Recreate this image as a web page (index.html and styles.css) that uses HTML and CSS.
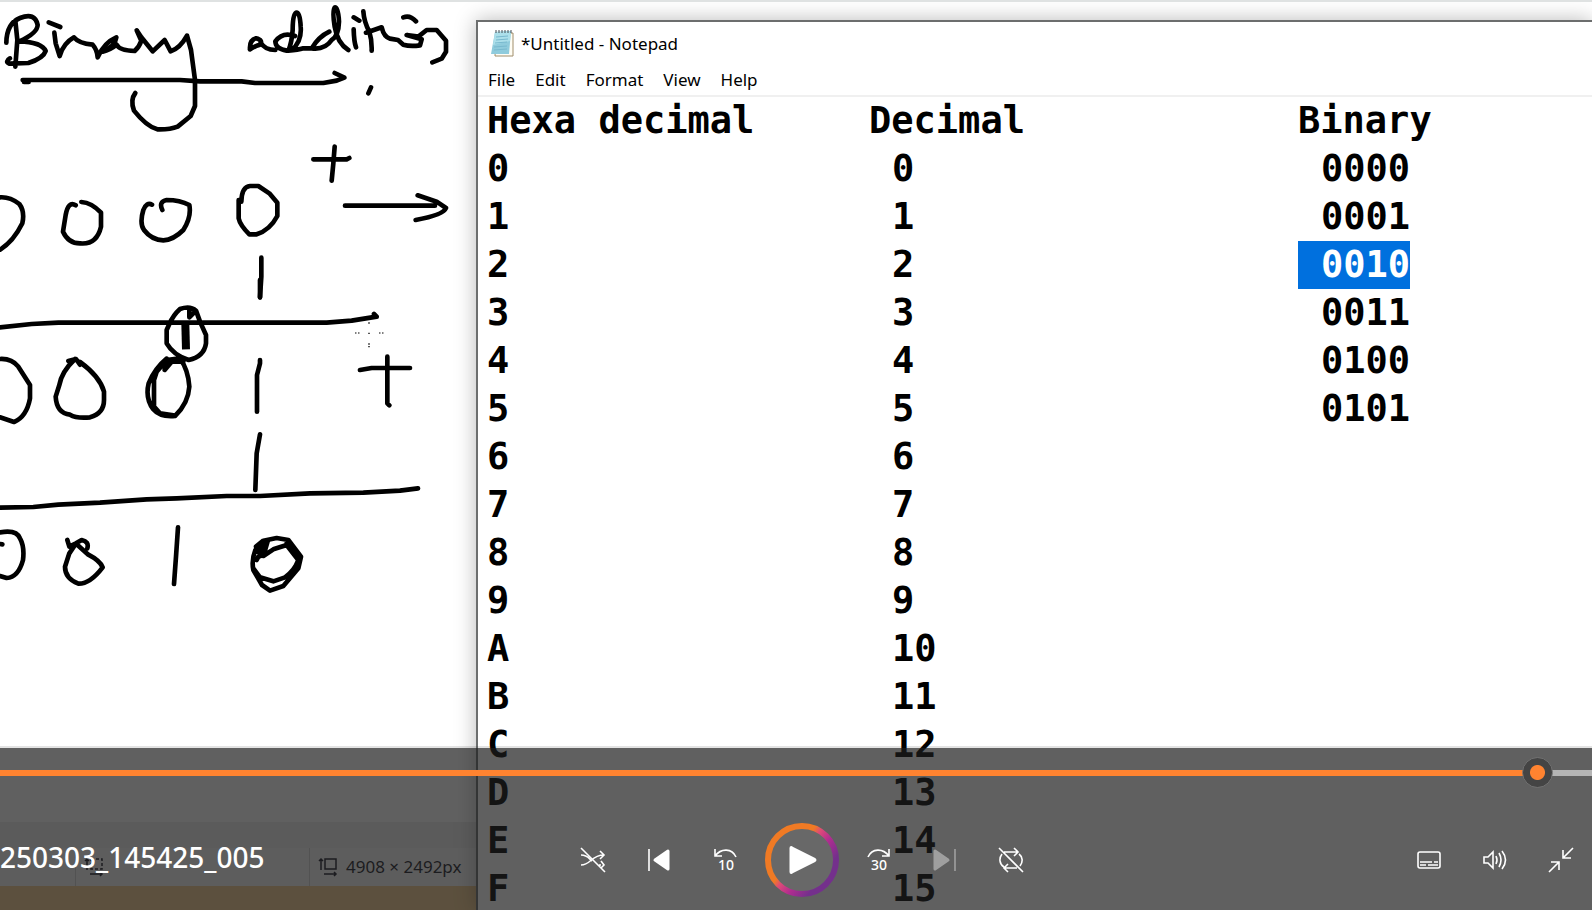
FILE: index.html
```html
<!DOCTYPE html>
<html lang="en">
<head>
<meta charset="utf-8">
<title>250303_145425_005</title>
<link rel="stylesheet" href="styles.css">
</head>
<body>
<main class="player">
  <div class="video">
    <section class="paint" aria-label="Whiteboard">
      <svg class="ink" viewBox="0 0 1428 2238" role="img" aria-label="Handwritten binary addition">
        <g>
          <path d="M19 128Q20 70 60 54Q105 36 113 75Q112 100 58 124Q125 126 137 153Q130 175 85 189L28 191Q14 184 30 175M46 62L52 120L46 200M146 67L181 81M163 98L167 130L179 168Q190 130 222 112Q236 130 278 134Q292 150 293 172Q312 128 349 112Q345 140 308 155Q330 150 350 134Q358 152 404 153Q418 140 424 122L410 91L424 112L458 154L494 120L512 154Q540 145 561 107L573 150L585 240V318L572 348L533 380Q510 389 472 388Q440 380 402 332Q390 300 406 279"/>
          <path d="M68 240H540L600 244H725L765 249H970L1010 242L1033 233L1004 219M86 246H72M1113 262L1105 280"/>
          <g transform="translate(720 0)">
            <path d="M30 148Q28 120 48 115Q70 120 60 134Q45 138 30 148M62 128Q75 150 106 150M165 108Q128 94 106 124Q106 146 140 152L155 150Q186 125 182 80Q180 38 170 38Q158 38 158 90Q155 130 145 152Q175 150 190 145L225 145M268 95Q236 110 215 145Q255 150 275 120Q296 108 297 65Q295 22 285 22Q276 30 284 80Q292 130 325 150M341 88Q342 125 348 142M341 52L358 62M370 34Q372 65 388 95Q396 120 395 152M378 98L425 82Q432 112 450 116L474 120L490 134Q510 140 540 136L545 118L500 105L535 110L560 90H590L618 122V155L605 176L577 187M490 52Q510 44 528 64"/>
          </g>
          <path d="M940 478H1040L1048 474M1004 440L1000 490L995 542M0 592Q30 590 58 612Q75 635 67 670Q40 725 0 749M227 616Q205 602 197 645L189 695Q205 730 240 730Q290 735 303 680V638Q275 608 244 606M456 614Q440 605 430 630Q418 670 432 690Q455 720 490 721Q520 720 550 690Q575 650 568 615Q540 600 500 600Q475 605 487 630M724 605Q725 560 750 558H775L808 580L832 608V648Q810 690 770 703H748Q720 675 716 655V600M784 773V830L780 892M1035 617H1305M1253 586L1310 605L1338 624Q1330 645 1247 660"/>
        </g>
        <g transform="translate(0 840)">
          <path d="M780 0V52M0 142L95 132L175 128H980L1055 122L1130 110L1122 102M0 237Q35 235 55 260L90 315V355Q80 410 42 426L0 412M205 243L228 237L240 254M225 237Q185 275 178 315L167 350Q170 400 210 404Q230 416 270 412Q312 400 312 360V335Q300 290 240 246M508 132L500 150V190Q520 225 566 240Q612 230 618 190V165L600 125L588 92Q570 76 540 87Q520 105 508 132M568 84V112L585 95M500 236Q465 265 446 310Q435 355 460 388Q480 412 525 408Q565 370 568 320Q565 270 540 235L500 240L470 275L462 300V380L480 400L520 406M500 236L494 270L515 245H550M780 240V250L771 285V395M780 463L770 520L766 630M1080 270L1115 264H1230M1162 230V370L1168 376M0 683L100 681L175 674L300 668L440 658L530 655L680 648H780L930 640L1090 638L1200 632L1254 625M0 757Q50 748 60 775Q74 800 69 840Q55 892 20 894L0 888M0 792L7 793M202 780L208 800L228 790L245 780Q268 785 262 805M208 800L225 795L208 820L195 860Q195 895 235 911Q270 912 308 862Q300 842 265 824L230 793M534 742L528 830L522 912"/>
          <path d="M782 828L768 800L790 782L830 774L865 780L903 830L895 865L850 918L810 932L786 915L760 870Q754 840 766 810L804 780L790 828L820 808L860 795L895 840Q885 870 855 892L820 904L780 892L760 865M798 785L770 840M860 790L900 830L880 872"/>
          <path class="thick" d="M556 132L558 208"/>
          <path class="cursor-dots" d="M1105 129H1109M1066 159H1069M1075 159H1078M1105 160H1109M1138 159H1141M1147 159H1150M1105 192H1109M1105 200H1109"/>
        </g>
      </svg>
      <div class="paint-status">
        <div class="status-cell"></div>
        <div class="status-cell selection-size">
          <svg class="status-icon" viewBox="0 0 20 20" aria-hidden="true"><path d="M3 13V2M1 4L3 2L5 4M6 17H18M16 15L18 17L16 19"/><path stroke-dasharray="3 2" d="M7 2H18V12H7Z"/></svg>
        </div>
        <div class="status-cell canvas-size">
          <svg class="status-icon" viewBox="0 0 20 20" aria-hidden="true"><path d="M3 13V2M1 4L3 2L5 4M7 2H18V12H7ZM6 17H18M16 15L18 17L16 19"/></svg>
          <span>4908 × 2492px</span>
        </div>
      </div>
      <div class="taskbar"></div>
    </section>

    <section class="notepad" aria-label="Notepad">
      <header class="titlebar">
        <svg class="notepad-icon" viewBox="0 0 24 28" aria-hidden="true">
          <path d="M6 5L23 4V27H5Z" fill="#fffdf4" stroke="#a08d6a"/>
          <path d="M5 3L21 2L19 25H1L3 14Z" fill="#8fcbdc"/>
          <path d="M5 3L21 2L20 12L3 16Z" fill="#acdfea"/>
          <path d="M6 8L18 7M6 11L18 10M5 14L17 13M4 18L17 17M4 21L17 20" stroke="#78b9ce" fill="none"/>
          <path d="M6 1V4M9 1V4M12 1V4M15 1V4M18 1V4M21 1V4" stroke="#454b50"/>
        </svg>
        <h1>*Untitled - Notepad</h1>
      </header>
      <nav class="menubar" aria-label="Notepad menu">
        <button type="button">File</button>
        <button type="button">Edit</button>
        <button type="button">Format</button>
        <button type="button">View</button>
        <button type="button">Help</button>
      </nav>
      <table class="document">
        <colgroup><col class="col-hex"><col class="col-dec"><col></colgroup>
        <thead><tr><th>Hexa decimal</th><th>Decimal</th><th>Binary</th></tr></thead>
        <tbody>
          <tr><td>0</td><td>0</td><td>0000</td></tr>
          <tr><td>1</td><td>1</td><td>0001</td></tr>
          <tr><td>2</td><td>2</td><td><mark>0010</mark></td></tr>
          <tr><td>3</td><td>3</td><td>0011</td></tr>
          <tr><td>4</td><td>4</td><td>0100</td></tr>
          <tr><td>5</td><td>5</td><td>0101</td></tr>
          <tr><td>6</td><td>6</td><td></td></tr>
          <tr><td>7</td><td>7</td><td></td></tr>
          <tr><td>8</td><td>8</td><td></td></tr>
          <tr><td>9</td><td>9</td><td></td></tr>
          <tr><td>A</td><td>10</td><td></td></tr>
          <tr><td>B</td><td>11</td><td></td></tr>
          <tr><td>C</td><td>12</td><td></td></tr>
          <tr><td>D</td><td>13</td><td></td></tr>
          <tr><td>E</td><td>14</td><td></td></tr>
          <tr><td>F</td><td>15</td><td></td></tr>
        </tbody>
      </table>
    </section>
  </div>

  <div class="overlay">
    <input class="seek" type="range" min="0" max="1000" value="975" aria-label="Seek">
    <div class="controls">
      <p class="title">250303_145425_005</p>
      <div class="transport">
        <button class="control" type="button" aria-label="Shuffle off">
          <svg class="icon" viewBox="0 0 24 24"><path d="M0 7C7 7 8 11 11 13M0 17C10 17 10 7 23 7M19 3L23 7L19 11M18 17H20M20 13L23 17L20 20M0 0L24 24"/></svg>
        </button>
        <button class="control" type="button" aria-label="Previous">
          <svg class="icon" viewBox="0 0 24 24"><path d="M2 1V23"/><path class="solid" d="M21 3V21L8 12Z"/></svg>
        </button>
        <button class="control" type="button" aria-label="Skip back 10 seconds">
          <svg class="icon" viewBox="0 0 24 24"><path d="M2 1V8H9M2 8C8 0 19 0 23 9"/><text x="13" y="22">10</text></svg>
        </button>
        <button class="control play" type="button" aria-label="Play">
          <svg class="play-icon" viewBox="0 0 74 74">
            <defs><linearGradient id="ring" x1="0.1" y1="0.2" x2="0.9" y2="0.8">
              <stop offset="0.36" stop-color="#f07a24"/><stop offset="0.46" stop-color="#dd4a78"/><stop offset="0.64" stop-color="#b02c90"/><stop offset="0.88" stop-color="#74308c"/>
            </linearGradient></defs>
            <circle class="ring" cx="37" cy="37" r="34" stroke="url(#ring)"/>
            <path class="solid" d="M26 25V49Q26 50 27 49L49 38Q51 37 49 36L27 25Q26 24 26 25Z"/>
          </svg>
        </button>
        <button class="control" type="button" aria-label="Skip forward 30 seconds">
          <svg class="icon" viewBox="0 0 24 24"><path d="M22 1V8H15M22 8C16 0 5 0 1 9"/><text x="12" y="22">30</text></svg>
        </button>
        <button class="control" type="button" aria-label="Next" disabled>
          <svg class="icon" viewBox="0 0 24 24"><path d="M22 1V23"/><path class="solid" d="M2 3V21L15 12Z"/></svg>
        </button>
        <button class="control" type="button" aria-label="Repeat off">
          <svg class="icon" viewBox="0 0 24 24"><path d="M5 4H18M15 0L19 4L15 8M20 6C24 9 24 14 21 18M3 6C0 10 0 16 5 19M18 20H6M9 16L5 20L9 24M0 0L24 24"/></svg>
        </button>
      </div>
      <div class="options">
        <button class="control" type="button" aria-label="Subtitles">
          <svg class="icon" viewBox="0 0 24 24"><rect x="1" y="4" width="22" height="16" rx="2"/><path d="M3 14H15M17 14H21M3 17H9M11 17H21"/></svg>
        </button>
        <button class="control" type="button" aria-label="Volume">
          <svg class="icon" viewBox="0 0 24 24"><path d="M1 9V15H5L10 20V4L5 9ZM13 8Q15 12 13 16M16 5Q20 12 16 19M19 3Q26 12 19 21"/></svg>
        </button>
        <button class="control" type="button" aria-label="Exit full screen">
          <svg class="icon" viewBox="0 0 24 24"><path d="M24 0L14 10M14 2V10H22M0 24L10 14M2 14H10V22"/></svg>
        </button>
      </div>
    </div>
  </div>
</main>
</body>
</html>
```

FILE: styles.css
```css
* { box-sizing: border-box; }

body {
  margin: 0;
  font-family: "Noto Sans", "Open Sans", sans-serif;
  color: #000;
}

button {
  padding: 0;
  border: 0;
  background: none;
  color: inherit;
  font: inherit;
}

.player {
  position: relative;
  height: 100vh;
  overflow: hidden;
}

/* Recorded desktop */
.video {
  display: grid;
  grid-template-rows: minmax(0, 1fr);
  grid-template-columns: auto 1fr;
  height: 100%;
  overflow: hidden;
  border-top: 2px solid #dfe2e2;
  background: #fff;
}

.paint {
  display: flex;
  flex-direction: column;
  min-height: 0;
  margin-top: -2px;
}

.ink {
  display: block;
  width: 476px;
  fill: none;
  stroke: #000;
  stroke-width: 14;
  stroke-linecap: round;
  stroke-linejoin: round;
}

.ink .thick { stroke-width: 24; stroke-linecap: butt; }
.ink .cursor-dots { stroke-width: 4; stroke-linecap: butt; }

.paint-status {
  display: flex;
  margin-top: auto;
  border-top: 26px solid #ededed;
  background: #f5f5f5;
  color: #1c1c28;
  font-size: 17px;
  line-height: 38px;
}

.status-cell {
  display: flex;
  align-items: center;
  gap: 8px;
  padding-left: 8px;
  border-right: 1px solid #d0d0d0;
}

.status-cell:first-child { width: 76px; }
.selection-size { width: 234px; }
.canvas-size { flex: 1; border: 0; white-space: nowrap; }

.status-icon {
  width: 20px;
  height: 20px;
  fill: none;
  stroke: #1c1c28;
  stroke-width: 1.5;
}

.taskbar {
  height: 24px;
  background: #f0c98c;
}

.notepad {
  margin-top: 18px;
  border: solid #6c6e6e;
  border-width: 2px 0 0 2px;
  background: #fff;
  box-shadow: 0 0 20px rgba(0, 0, 0, 0.28);
}

.titlebar {
  display: flex;
  align-items: center;
  gap: 7px;
  height: 42px;
  padding-left: 12px;
}

.titlebar h1 {
  margin: 0;
  font-size: 17px;
  font-weight: 400;
}

.notepad-icon { width: 24px; height: 28px; }

.menubar {
  display: flex;
  align-items: center;
  gap: 20px;
  height: 33px;
  padding-left: 10px;
  border-bottom: 2px solid #f0f0f0;
  font-size: 17px;
}

.document {
  width: 100%;
  table-layout: fixed;
  border-collapse: collapse;
  font: bold 37px/48px "DejaVu Sans Mono", monospace;
  text-align: left;
  white-space: nowrap;
}

.document th,
.document td {
  height: 48px;
  padding: 0 0 0 9px;
}

.document td + td { padding-left: 32px; }
.col-hex { width: 382px; }
.col-dec { width: 429px; }

.document mark {
  display: block;
  width: fit-content;
  margin-left: -23px;
  padding-left: 23px;
  background: #0070de;
  color: #fff;
}

/* Playback controls */
.overlay {
  position: absolute;
  right: 0;
  bottom: 0;
  left: 0;
  height: 164px;
  padding-top: 9px;
  border-top: 2px solid rgba(28, 28, 28, 0.12);
  background: rgba(28, 28, 28, 0.7);
  background-clip: padding-box;
  color: #fff;
}

.seek {
  display: block;
  width: 100%;
  height: 31px;
  margin: 0;
  background: linear-gradient(to right, #ff8330 97%, #b5b5b5 97%) center / 100% 6px no-repeat;
  appearance: none;
}

.seek::-webkit-slider-thumb {
  width: 31px;
  height: 31px;
  border: 1px solid #707070;
  border-radius: 50%;
  background: radial-gradient(circle, #ff8330 0 7px, #444 8px);
  appearance: none;
}

.controls {
  display: grid;
  grid-template-columns: 1fr auto 1fr;
  align-items: center;
  padding-top: 35px;
}

.title {
  margin: 0;
  padding-bottom: 6px;
  font-size: 28px;
  font-weight: 500;
  line-height: 36px;
  white-space: nowrap;
}

.transport,
.options {
  display: flex;
  align-items: center;
  gap: 14px;
}

.transport { margin-left: 12px; }
.options { justify-content: flex-end; padding-right: 5px; }

.control {
  display: flex;
  align-items: center;
  justify-content: center;
  width: 52px;
  height: 52px;
}

.control:disabled { opacity: 0.4; }

.play { width: 74px; height: 74px; }
.play-icon { width: 74px; height: 74px; }

.icon {
  width: 24px;
  height: 24px;
  overflow: visible;
  fill: none;
  stroke: #fff;
  stroke-width: 1.6;
}

.icon text {
  fill: #fff;
  stroke: none;
  font: 500 14px "Noto Sans", sans-serif;
  text-anchor: middle;
}

.solid {
  fill: #fff;
  stroke: #fff;
  stroke-width: 3;
  stroke-linejoin: round;
}

.ring { fill: rgba(255, 255, 255, 0.05); stroke-width: 6; }
```
